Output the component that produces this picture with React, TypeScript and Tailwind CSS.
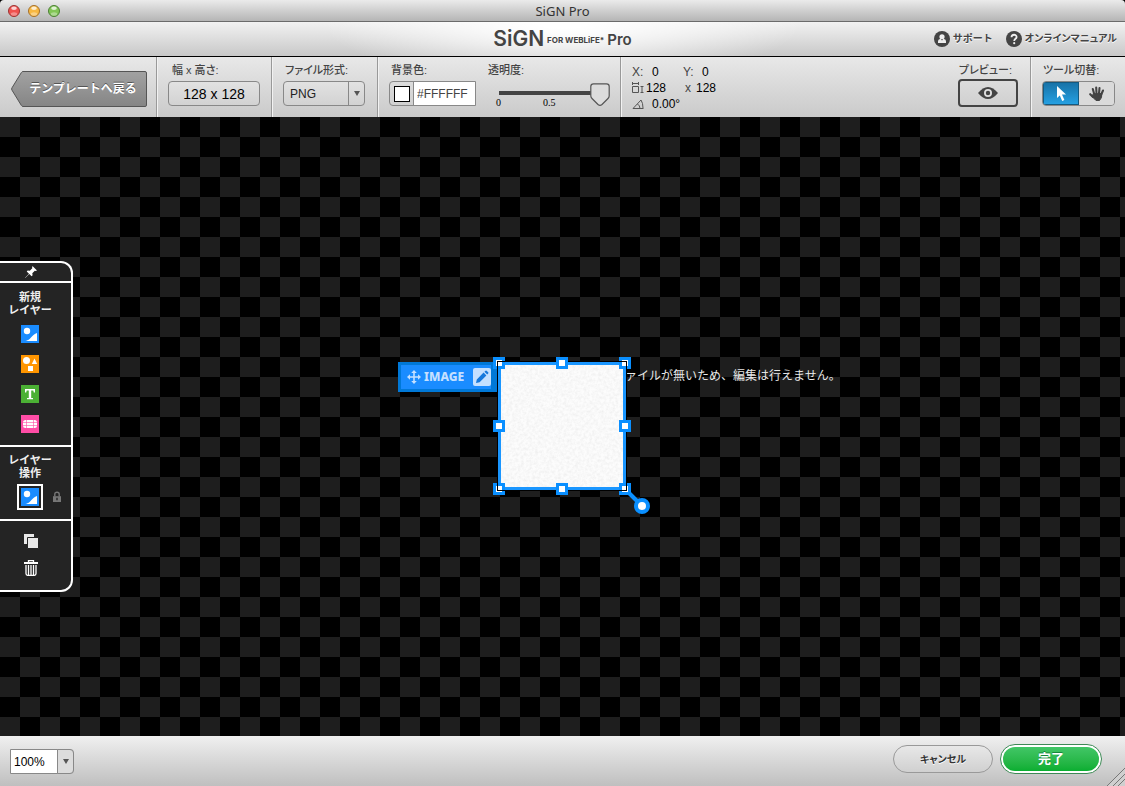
import { useState } from "react";

const HANDLES = [
  [12, 12],
  [75, 12],
  [138, 12],
  [12, 75],
  [138, 75],
  [12, 138],
  [75, 138],
  [138, 138],
];

function Light({ color, ring, label }: { color: string; ring: string; label: string }) {
  return (
    <button type="button" aria-label={label} className="size-3">
      <svg viewBox="0 0 12 12" className="size-3">
        <circle cx="6" cy="6" r="5.5" fill={color} stroke={ring} />
        <ellipse cx="6" cy="3.2" rx="2.8" ry="1.7" fill="#fff" opacity="0.75" />
        <ellipse cx="6" cy="9" rx="3.2" ry="1.8" fill="#fff" opacity="0.35" />
      </svg>
    </button>
  );
}

function ImageIcon() {
  return (
    <svg viewBox="0 0 18 18" className="size-[18px]">
      <rect width="18" height="18" fill="#1a8cff" />
      <circle cx="6" cy="6" r="3.2" fill="#fff" />
      <path d="M3 16c4-.4 5-1.4 7-3.6s3.5-3.4 6-4.4v8z" fill="#fff" />
    </svg>
  );
}

function ShapeIcon() {
  return (
    <svg viewBox="0 0 18 18" className="size-[18px]">
      <rect width="18" height="18" fill="#ff9500" />
      <circle cx="5.5" cy="5.5" r="3.5" fill="#fff" />
      <path d="M13.5 3.5 16.2 9h-5.4z" fill="#fff" />
      <rect x="7" y="11" width="5" height="5" fill="#fff" />
    </svg>
  );
}

function TextIcon() {
  return (
    <svg viewBox="0 0 18 18" className="size-[18px]">
      <rect width="18" height="18" fill="#4bb034" />
      <path
        d="M4 4h10v3.500h-1.200L12.300 5.500H10.200V13h1.800v1.200H6V13h1.800V5.500H5.700L5.200 7.500H4z"
        fill="#fff"
      />
    </svg>
  );
}

function ButtonIcon() {
  return (
    <svg viewBox="0 0 18 18" className="size-[18px]">
      <rect width="18" height="18" fill="#ff4da6" />
      <rect x="2" y="5" width="14" height="8" rx="2.5" fill="#fff" />
      <path d="M2 7.500h14M2 10.500h14M5.500 5v8M12.500 5v8" stroke="#ff4da6" strokeWidth="0.6" />
    </svg>
  );
}

function Arrow() {
  return (
    <svg viewBox="0 0 6 5" className="h-[5px] w-[6px]">
      <path d="M0 0h6L3 5z" fill="#555" />
    </svg>
  );
}

export default function App() {
  const [opacity, setOpacity] = useState(1);
  const [color, setColor] = useState("#FFFFFF");
  const [tool, setTool] = useState("select");

  return (
    <div className="flex h-screen flex-col overflow-hidden bg-black font-['Liberation_Sans','Noto_Sans_CJK_JP',sans-serif] text-[#444]">
      {/* Title bar */}
      <div className="grid h-[22px] shrink-0 grid-cols-3 items-center rounded-t border-b border-[#6b6b6b] bg-linear-to-b from-[#ebebeb] to-[#b5b5b5] px-2">
        <div className="flex gap-2">
          <Light color="#f0524f" ring="#9c3433" label="Close" />
          <Light color="#f7b842" ring="#a5702a" label="Minimize" />
          <Light color="#82c656" ring="#4b8034" label="Zoom" />
        </div>
        <h1 className="text-center font-['Noto_Sans',sans-serif] text-[13px] leading-5 text-[#333]">SiGN Pro</h1>
      </div>

      {/* Header */}
      <header className="grid h-[35px] shrink-0 grid-cols-[1fr_auto_1fr] items-center border-b border-black bg-[radial-gradient(ellipse_240px_60px_at_50%_0,#fff_10%,transparent),linear-gradient(#f2f2f2,#c8c8c8)]">
        <div />
        <div className="flex items-center gap-[3px] font-['Inter',sans-serif] text-[#444]">
          <span className="text-[21px] leading-6 font-semibold">SiGN</span>
          <span className="pt-[2px] text-[8px] leading-3 font-bold">FOR WEBLiFE*</span>
          <span className="pt-[2px] text-[15px] leading-6 font-semibold">Pro</span>
        </div>
        <nav className="flex items-center justify-end gap-[13px] pr-2 text-[10px] leading-4 font-bold [text-shadow:0_1px_0_#fff]">
          <a href="#support" className="flex items-center gap-[3px]">
            <svg viewBox="0 0 16 16" className="size-4">
              <circle cx="8" cy="8" r="8" fill="#444" />
              <circle cx="8" cy="5.8" r="2.6" fill="#eee" />
              <path d="M4 12V10.200Q4 8.600 6 8h4q2 .6 2 2.200V12z" fill="#eee" />
              <path d="M6.800 8.200h2.400L8 9.600z" fill="#444" />
            </svg>
            サポート
          </a>
          <a href="#manual" className="flex items-center gap-[3px] [font-feature-settings:'palt']">
            <svg viewBox="0 0 16 16" className="size-4">
              <circle cx="8" cy="8" r="8" fill="#444" />
              <path d="M5.500 6.300C5.500 2.900 10.700 3 10.600 6.100 10.500 7.800 8.200 7.900 8.200 10" fill="none" stroke="#eee" strokeWidth="1.8" />
              <circle cx="8.2" cy="12.2" r="1.1" fill="#eee" />
            </svg>
            オンラインマニュアル
          </a>
        </nav>
      </header>

      {/* Toolbar */}
      <div className="flex h-[60px] shrink-0 bg-linear-to-b from-[#e8e8e8] to-[#cacaca] text-[11px] leading-4 font-medium [font-feature-settings:'palt']">
        <div className="flex w-[157px] items-center border-r border-[#999] pt-1 pl-[11px]">
          <button
            type="button"
            className="relative h-9 w-[136px] pl-2 text-[12px] font-bold text-white [font-feature-settings:normal] [text-shadow:0_-1px_0_#555]"
          >
            <svg viewBox="0 0 136 36" className="absolute inset-0 h-9 w-[136px]">
              <defs>
                <linearGradient id="back" x2="0" y2="1">
                  <stop stopColor="#a2a2a2" />
                  <stop offset="1" stopColor="#858585" />
                </linearGradient>
              </defs>
              <path d="M12 .5h122q1.500 0 1.500 1.500v32q0 1.500-1.500 1.500H12q-1 0-1.600-1L1 19.200q-.8-1.200 0-2.400L10.400 1.500q.6-1 1.600-1z" fill="url(#back)" stroke="#555" />
            </svg>
            <span className="relative">テンプレートへ戻る</span>
          </button>
        </div>

        <div className="flex w-[115px] flex-col gap-[3px] border-r border-[#999] pt-[5px] pl-[11px] shadow-[inset_1px_0_0_#f2f2f2]">
          <label htmlFor="size" className="pl-1">幅 x 高さ:</label>
          <input
            id="size"
            readOnly
            value="128 x 128"
            className="h-[25px] w-[92px] rounded border border-[#888] bg-linear-to-b from-[#e2e2e2] to-[#d2d2d2] text-center text-[14px] font-normal text-black"
          />
        </div>

        <div className="flex w-[106px] flex-col gap-[3px] border-r border-[#999] pt-[5px] pl-[11px] shadow-[inset_1px_0_0_#f2f2f2]">
          <label htmlFor="format" className="pl-[2px]">ファイル形式:</label>
          <div className="relative h-[25px] w-[82px]">
            <select id="format" className="h-[25px] w-full appearance-none rounded border border-[#888] bg-linear-to-b from-[#e2e2e2] to-[#d2d2d2] pl-[6px] text-[12px] text-[#222]">
              <option>PNG</option>
              <option>JPEG</option>
              <option>GIF</option>
            </select>
            <span className="pointer-events-none absolute inset-y-0 right-0 flex w-[17px] items-center justify-center border-l border-[#888]">
              <Arrow />
            </span>
          </div>
        </div>

        <div className="flex w-[243px] border-r border-[#999] pt-[5px] pl-[11px] shadow-[inset_1px_0_0_#f2f2f2]">
          <div className="flex w-[98px] flex-col gap-[3px]">
            <label htmlFor="color" className="pl-[2px]">背景色:</label>
            <div className="flex h-[25px] w-[87px] rounded-l border border-[#888]">
              <button type="button" aria-label="背景色" className="flex w-6 items-center justify-center border-r border-[#888]">
                <span className="size-4 border border-black bg-white" />
              </button>
              <input
                id="color"
                value={color}
                onChange={(e) => setColor(e.target.value)}
                className="w-0 flex-1 bg-white pl-[3px] text-[12px] text-[#444]"
              />
            </div>
          </div>
          <div className="w-[124px]">
            <label htmlFor="opacity" className="block pl-px">透明度:</label>
            <div className="relative mt-[5px] ml-[12px] h-[14px] w-[110px]">
              <input
                id="opacity"
                type="range"
                min="0"
                max="1"
                step="0.1"
                value={opacity}
                onChange={(e) => setOpacity(Number(e.target.value))}
                className="block h-[18px] w-[110px] appearance-none bg-[linear-gradient(#444,#444)] bg-[length:100px_4px] bg-[position:0_8px] bg-no-repeat [&::-webkit-slider-thumb]:size-5 [&::-webkit-slider-thumb]:appearance-none"
              />
              <svg
                viewBox="0 0 20 24"
                className="pointer-events-none absolute top-0 h-6 w-5"
                style={{ left: opacity * 91 }}
              >
                <path d="M3.500.8h13q2.700 0 2.700 2.700v9.200q0 1.600-1.200 2.800l-6 6q-2 1.600-4 0l-6-6Q.8 14.300.8 12.700V3.500Q.8.800 3.500.8z" fill="#dcdcdc" stroke="#555" strokeWidth="1.2" />
              </svg>
            </div>
            <div className="flex font-['Liberation_Serif',serif] text-[10px] leading-3 text-black">
              <span className="w-[56px] pl-[9px]">0</span>
              <span>0.5</span>
            </div>
          </div>
        </div>

        <div className="min-w-0 flex-1 pt-[7px] pl-[11px] text-[12px] shadow-[inset_1px_0_0_#f2f2f2]">
          <div className="flex">
            <span className="w-5">X:</span>
            <span className="w-[31px] text-black">0</span>
            <span className="w-[19px]">Y:</span>
            <span className="text-black">0</span>
          </div>
          <div className="flex items-center">
            <svg viewBox="0 0 12 12" className="mr-[2px] size-3" fill="none" stroke="#555">
              <path d="M.5 4.500h6v6h-6zM0 1.500h7M.5 0v3M6.500 0v3M10 4.500v6M8.500 4.500h3M8.500 10.500h3" />
            </svg>
            <span className="w-[39px] text-black">128</span>
            <span className="w-[11px]">x</span>
            <span className="text-black">128</span>
          </div>
          <div className="flex items-center">
            <svg viewBox="0 0 12 12" className="mr-2 size-3" fill="none" stroke="#555">
              <path d="M11.500 10.500H1L9 2M5.500 6q2.500 1.500 2.500 4.500M9 2q2 3 2 8" />
            </svg>
            <span className="text-black">0.00°</span>
          </div>
        </div>

        <div className="flex w-[72px] flex-col pt-[5px]">
          <span className="pl-px">プレビュー:</span>
          <button type="button" aria-label="プレビュー" className="mt-px flex h-7 w-[60px] items-center justify-center rounded border-2 border-[#444]">
            <svg viewBox="0 0 20 12" className="h-3 w-5">
              <path d="M0 6Q10-6 20 6 10 18 0 6z" fill="#444" />
              <circle cx="10" cy="6" r="3.1" fill="none" stroke="#e0e0e0" strokeWidth="1.8" />
            </svg>
          </button>
        </div>

        <div className="flex w-[95px] flex-col gap-[3px] border-l border-[#999] pt-[5px] pl-[11px] shadow-[inset_1px_0_0_#f2f2f2]">
          <span className="pl-px">ツール切替:</span>
          <div className="flex h-[25px] w-[73px] overflow-hidden rounded border border-[#888]">
            <button
              type="button"
              aria-label="選択"
              aria-pressed={tool === "select"}
              onClick={() => setTool("select")}
              className="flex w-9 items-center justify-center border border-[#155a80] bg-linear-to-b from-[#1873a8] to-[#25a0e2]"
            >
              <svg viewBox="0 0 11 15" className="h-[15px] w-[11px]">
                <path d="M1 0v12l2.800-2.600L6.200 15l2.200-1L6 8.500h4z" fill="#fff" />
              </svg>
            </button>
            <button
              type="button"
              aria-label="手のひら"
              aria-pressed={tool === "hand"}
              onClick={() => setTool("hand")}
              className="flex flex-1 items-center justify-center bg-[#dadada]"
            >
              <svg viewBox="0 0 16 16" className="size-4" fill="none" stroke="#444" strokeLinecap="round">
                <path d="M5.200 8 3.800 3M7.500 7.500 7.200 1.500M10 7.500l.5-5.500M12 9l2-4.500M4 11 1.200 8.200" strokeWidth="2.1" />
                <path d="M4.500 7.800 12.800 7.500 12.500 11.500 10.500 14.500H7L3.500 11z" fill="#444" strokeWidth="1" />
              </svg>
            </button>
          </div>
        </div>
      </div>

      {/* Canvas */}
      <main className="relative flex flex-1 items-center justify-center overflow-hidden bg-[repeating-conic-gradient(#000_0_25%,#1e1e1e_0_50%)] bg-[length:40px_40px]">
        {/* Selected layer */}
        <div className="relative size-[151px]">
          <p className="absolute top-[15px] left-[138px] text-[12px] leading-5 whitespace-nowrap text-[#e8e8e8]">
            ァイルが無いため、編集は行えません。
          </p>
          <div className="absolute top-[11px] -left-[89px] flex h-[30px] w-[99px] items-center border-[3px] border-r-[6px] border-[#0078d7] bg-[#1a8cff] pl-[6px] font-['Noto_Sans',sans-serif] text-[12px] font-extrabold text-[#c5e0ff]">
            <svg viewBox="0 0 14 14" className="mr-[3px] size-[14px]" fill="#c5e0ff">
              <path d="M7 0l2.800 3H7.800v3.200H11v-2L14 7l-3 2.800V7.800H7.800V11h2L7 14l-2.800-3h2V7.800H3v2L0 7l3-2.800v2h3.200V3h-2z" />
            </svg>
            IMAGE
            <button type="button" aria-label="編集" className="ml-auto flex size-[18px] items-center justify-center rounded-xs bg-[#c5e0ff]">
              <svg viewBox="0 0 14 14" className="size-[14px]" fill="#1678dc">
                <path d="M1 13l.8-3.600L8.600 2.600l2.800 2.800L4.600 12.200zM9.400 1.800 10.600.8q.6-.4 1.200.1l1.400 1.400q.5.600 0 1.200l-1 1.100z" />
              </svg>
            </button>
          </div>
          <svg viewBox="0 0 180 180" className="absolute top-0 left-0 size-[180px] max-w-none">
            <defs>
              <filter id="paper" x="0" y="0" width="1" height="1">
                <feTurbulence type="fractalNoise" baseFrequency="0.35" numOctaves="3" />
                <feColorMatrix values="0 0 0 0 0.5  0 0 0 0 0.5  0 0 0 0 0.5  0.35 0 0 0 -0.12" />
              </filter>
            </defs>
            <path d="M138 138l17 17" stroke="#0a8fff" strokeWidth="4" />
            <rect x="12" y="12" width="126" height="126" fill="#fcfcfc" />
            <rect x="12" y="12" width="126" height="126" filter="url(#paper)" />
            <rect x="12.5" y="12.5" width="125" height="125" fill="none" stroke="#1a96ff" strokeWidth="3" />
            {HANDLES.map(([x, y]) => (
              <rect key={`${x}-${y}`} x={x - 4.5} y={y - 4.5} width="9" height="9" fill="#fff" stroke="#0a8fff" strokeWidth="3" />
            ))}
            <rect x="10.5" y="10.5" width="129" height="129" fill="none" stroke="#000" />
            {HANDLES.filter(([x, y]) => x === 75 || y === 75).map(([x, y]) => (
              <rect key={`m-${x}-${y}`} x={x - 4.5} y={y - 4.5} width="9" height="9" fill="#fff" stroke="#0a8fff" strokeWidth="3" />
            ))}
            <circle cx="155" cy="155" r="6" fill="#fff" stroke="#0a8fff" strokeWidth="4" />
          </svg>
        </div>

        {/* Layer panel */}
        <aside className="absolute inset-y-0 left-0 my-auto h-fit w-[73px] divide-y-2 divide-white rounded-r-xl border-2 border-l-0 border-white bg-[#242424] text-center text-[11px] leading-[13px] font-bold text-[#eee]">
          <div className="flex h-5 items-center justify-center pr-[10px]">
            <button type="button" aria-label="固定">
              <svg viewBox="0 0 12 12" className="size-3" fill="#fff">
                <path d="M7.500 0 12 4.500l-1.400.4-.8-.2L7.300 7.200l.3 2.100-1 1L4.300 8 .5 11.700 0 12l.3-.5L4 7.700 1.700 5.400l1-1 2.100.3 2.500-2.500L7.100 1.400z" />
              </svg>
            </button>
          </div>
          <div className="flex h-[164px] flex-col items-center pt-2 pr-[11px]">
            <h2>新規<br />レイヤー</h2>
            <div className="mt-2 flex flex-col gap-3">
              <button type="button" aria-label="画像"><ImageIcon /></button>
              <button type="button" aria-label="図形"><ShapeIcon /></button>
              <button type="button" aria-label="テキスト"><TextIcon /></button>
              <button type="button" aria-label="ボタン"><ButtonIcon /></button>
            </div>
          </div>
          <div className="flex h-[74px] flex-col items-center pt-[7px] pr-[11px]">
            <h2>レイヤー<br />操作</h2>
            <div className="mt-1 flex items-center gap-[9px] pl-[19px]">
              <button type="button" aria-label="画像レイヤー" className="flex size-[26px] items-center justify-center border-2 border-white">
                <ImageIcon />
              </button>
              <svg viewBox="0 0 10 12" className="h-3 w-[10px]">
                <path d="M2.800 5.500V3.300q0-2 2.200-2t2.200 2v2.200" fill="none" stroke="#777" strokeWidth="1.4" />
                <path d="M1 5.200h8V11H1z" fill="#777" />
                <path d="M5 6.800v2.500" stroke="#242424" strokeWidth="1.4" />
              </svg>
            </div>
          </div>
          <div className="flex h-[69px] flex-col items-center gap-[11px] pt-3 pr-[10px]">
            <button type="button" aria-label="複製">
              <svg viewBox="0 0 16 16" className="size-4">
                <path d="M1 1h10v10H1z" fill="#e8e8e8" />
                <path d="M4.500 4.500h11v11h-11z" fill="#e8e8e8" stroke="#242424" />
              </svg>
            </button>
            <button type="button" aria-label="削除">
              <svg viewBox="0 0 14 16" className="h-4 w-[14px]" fill="none" stroke="#fff">
                <path d="M0 3h14" strokeWidth="2" />
                <path d="M4.500 2V.7h5V2M2 5v8.500q0 1.800 1.500 1.800h7q1.500 0 1.500-1.800V5M4.500 5v10M7 5v10M9.500 5v10" strokeWidth="1.3" />
              </svg>
            </button>
          </div>
        </aside>
      </main>

      {/* Footer */}
      <footer className="relative flex h-[50px] shrink-0 items-center bg-linear-to-b from-[#f0f0f0] to-[#bfbfbf] pr-[23px] pl-[10px]">
        <div className="relative h-[25px] w-16">
          <select aria-label="表示倍率" className="h-[25px] w-full appearance-none rounded-r border border-[#888] bg-white pl-[3px] text-[12px] text-black">
            <option>100%</option>
            <option>200%</option>
          </select>
          <span className="pointer-events-none absolute inset-y-0 right-0 flex w-[17px] items-center justify-center rounded-r border border-[#888] bg-[#dcdcdc]">
            <Arrow />
          </span>
        </div>
        <div className="ml-auto flex items-center gap-[7px] pb-1 font-bold">
          <button type="button" className="h-7 w-[100px] rounded-full border border-[#999] bg-linear-to-b from-[#e8e8e8] to-[#d0d0d0] text-[10px] text-[#333] [font-feature-settings:'palt'] [text-shadow:0_1px_0_#fff]">
            キャンセル
          </button>
          <button type="button" className="h-[30px] w-[102px] rounded-full border border-[#3d8a55] bg-white p-[2px] text-[13px] text-white">
            <span className="flex h-full items-center justify-center rounded-full bg-linear-to-b from-[#41c666] to-[#09ae31] [text-shadow:0_-1px_0_#16863a]">
              完了
            </span>
          </button>
        </div>
        <svg viewBox="0 0 18 18" className="absolute right-0 bottom-0 size-[18px]">
          <path d="M18 0v18H0z" fill="#cfcfcf" />
          <path d="M0 18 18 0M6 18 18 6M11 18l7-7" fill="none" stroke="#777" />
        </svg>
      </footer>
    </div>
  );
}
